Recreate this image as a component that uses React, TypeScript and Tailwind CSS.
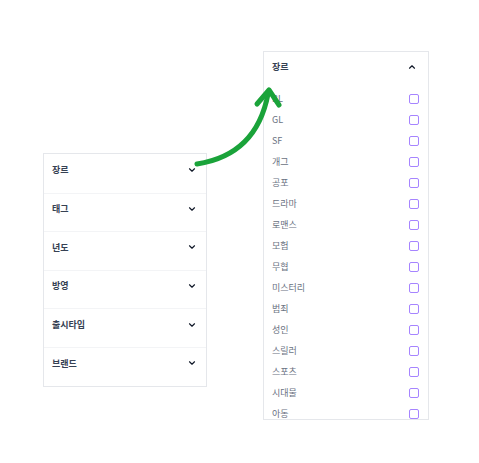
import { ChevronDown, ChevronUp } from "lucide-react";

const filters = ["장르", "태그", "년도", "방영", "출시타입", "브랜드"];

const genres = [
  "BL",
  "GL",
  "SF",
  "개그",
  "공포",
  "드라마",
  "로맨스",
  "모험",
  "무협",
  "미스터리",
  "범죄",
  "성인",
  "스릴러",
  "스포츠",
  "시대물",
  "아동",
];

const font = { fontFamily: '"Noto Sans CJK KR", "Noto Sans", sans-serif' };

export default function App() {
  return (
    <div
      className="relative w-[479px] h-[463px] bg-white overflow-hidden"
      style={font}
    >
      <div className="flex items-start gap-[56px] pl-[43px] pt-[51px]">
        {/* collapsed filter list */}
        <div className="mt-[102px] w-[164px] border border-gray-200 bg-white">
          {filters.map((f, i) => (
            <div
              key={f}
              className={
                "flex h-[38.6px] items-center justify-between pb-[7px] pl-[8px] pr-[9px] " +
                (i > 0 ? "border-t border-gray-100" : "")
              }
            >
              <span className="text-[9px] font-bold text-gray-700">{f}</span>
              <ChevronDown size={10} strokeWidth={2.75} className="text-gray-900" />
            </div>
          ))}
        </div>

        {/* expanded genre panel */}
        <div className="w-[166px] h-[369px] overflow-hidden border border-gray-200 bg-white">
          <div className="flex h-[36px] items-center justify-between pb-[6px] pl-[8px] pr-[11px]">
            <span className="text-[9px] font-bold text-gray-700">장르</span>
            <ChevronUp size={10} strokeWidth={2.75} className="text-gray-900" />
          </div>
          <div className="flex flex-col">
            {genres.map((g) => (
              <div
                key={g}
                className="flex h-[21px] items-center justify-between pl-[8px] pr-[9px]"
              >
                <span className="text-[9px] text-gray-500">{g}</span>
                <span className="h-[10px] w-[10px] rounded-[2px] border-[1.5px] border-violet-400" />
              </div>
            ))}
          </div>
        </div>
      </div>

      <svg
        className="absolute left-0 top-0 pointer-events-none"
        width="479"
        height="463"
        viewBox="0 0 479 463"
      >
        <path
          d="M197 164 C 236 158, 260 136, 268 94"
          fill="none"
          stroke="#1aa33a"
          strokeWidth="5"
          strokeLinecap="round"
        />
        <path
          d="M257 104 L 269 90 L 279 105"
          fill="none"
          stroke="#1aa33a"
          strokeWidth="5"
          strokeLinecap="round"
          strokeLinejoin="round"
        />
      </svg>
    </div>
  );
}
